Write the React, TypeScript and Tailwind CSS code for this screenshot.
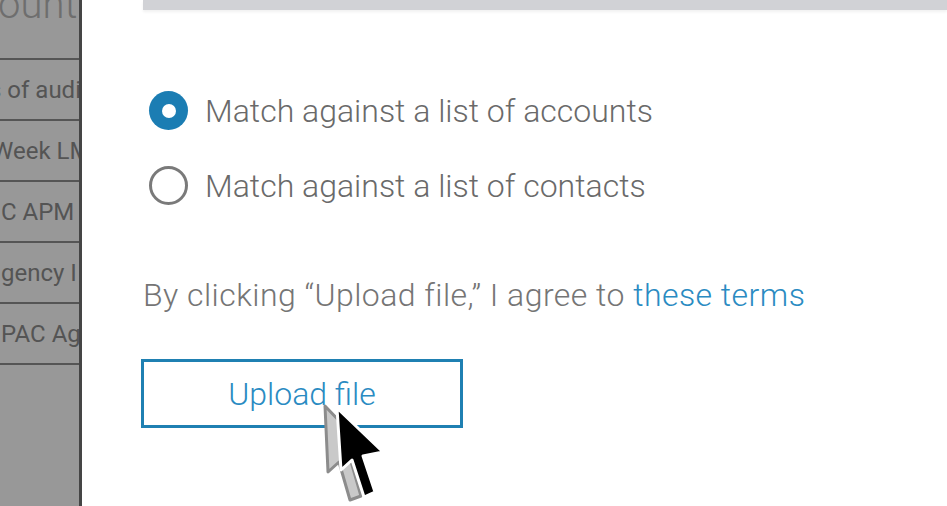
import React from "react";

const rows = [
  { text: "s of audi", cls: "-ml-[11px]" },
  { text: "Week LM", cls: "-ml-[8px]" },
  { text: "C APM (", cls: "ml-[1px]" },
  { text: "gency I", cls: "ml-[1px]" },
  { text: "PAC Ag", cls: "ml-[1px]" },
];

function Cursor() {
  // arrow pointer with a soft grey shadow to its left
  return (
    <svg
      className="absolute left-[318px] top-[402px]"
      width="80"
      height="104"
      viewBox="0 0 80 104"
    >
      <path
        d="M7 4 L10 70 L21 60 L32 98 L43 94 L32 56 L52 51 Z"
        fill="#c9c9c9"
        stroke="#8c8c8c"
        strokeWidth="3"
        strokeLinejoin="round"
      />
      <path
        d="M19 6 L23 68 L34 58 L46 95 L57 90 L45 54 L65 50 Z"
        fill="#000"
        stroke="#fff"
        strokeWidth="3"
        strokeLinejoin="round"
      />
    </svg>
  );
}

export default function App() {
  return (
    <div
      className="relative w-[947px] h-[506px] overflow-hidden bg-white flex"
      style={{ fontFamily: "Roboto, 'Liberation Sans', Arial, sans-serif" }}
    >
      {/* greyed-out table behind the dialog */}
      <div className="w-[82px] h-full bg-[#989898] border-r-[3px] border-[#454545] flex flex-col overflow-hidden shrink-0">
        <div className="h-[60px] border-b-2 border-[#555] overflow-hidden">
          <p className="text-[40px] font-light leading-none text-[#6e6e6e] -mt-[15px] -ml-[2px] whitespace-nowrap">
            ount
          </p>
        </div>
        {rows.map((r) => (
          <div
            key={r.text}
            className="h-[61px] border-b-2 border-[#555] flex items-center overflow-hidden"
          >
            <span
              className={`text-[24px] text-[#545454] whitespace-nowrap ${r.cls}`}
            >
              {r.text}
            </span>
          </div>
        ))}
      </div>

      {/* dialog body */}
      <div className="flex-1 flex flex-col pl-[61px]">
        <div className="h-[10px] bg-[#d1d2d6] shadow-[0_2px_3px_rgba(0,0,0,0.06)]" />

        <div className="mt-[81px] flex flex-col gap-[36px] pl-[6px]">
          <label className="flex items-center gap-[17px] h-[39px]">
            <span className="w-[39px] h-[39px] rounded-full bg-[#1b7db3] flex items-center justify-center">
              <span className="w-[14px] h-[14px] rounded-full bg-white" />
            </span>
            <span className="text-[32px] font-light text-[#6a6a6a]">
              Match against a list of accounts
            </span>
          </label>
          <label className="flex items-center gap-[17px] h-[39px]">
            <span className="w-[39px] h-[39px] rounded-full border-[3px] border-[#7a7a7a]" />
            <span className="text-[32px] font-light text-[#6a6a6a]">
              Match against a list of contacts
            </span>
          </label>
        </div>

        <p className="mt-[70px] text-[32px] font-light text-[#757575] tracking-[0.45px] leading-[40px] whitespace-nowrap">
          By clicking “Upload file,” I agree to{" "}
          <span className="text-[#2a8bc2]">these terms</span>
        </p>

        <button className="mt-[44px] -ml-[2px] w-[322px] h-[69px] border-[3px] border-[#1f80b2] text-[32px] font-light text-[#2a8bc2]">
          Upload file
        </button>
      </div>

      <Cursor />
    </div>
  );
}
